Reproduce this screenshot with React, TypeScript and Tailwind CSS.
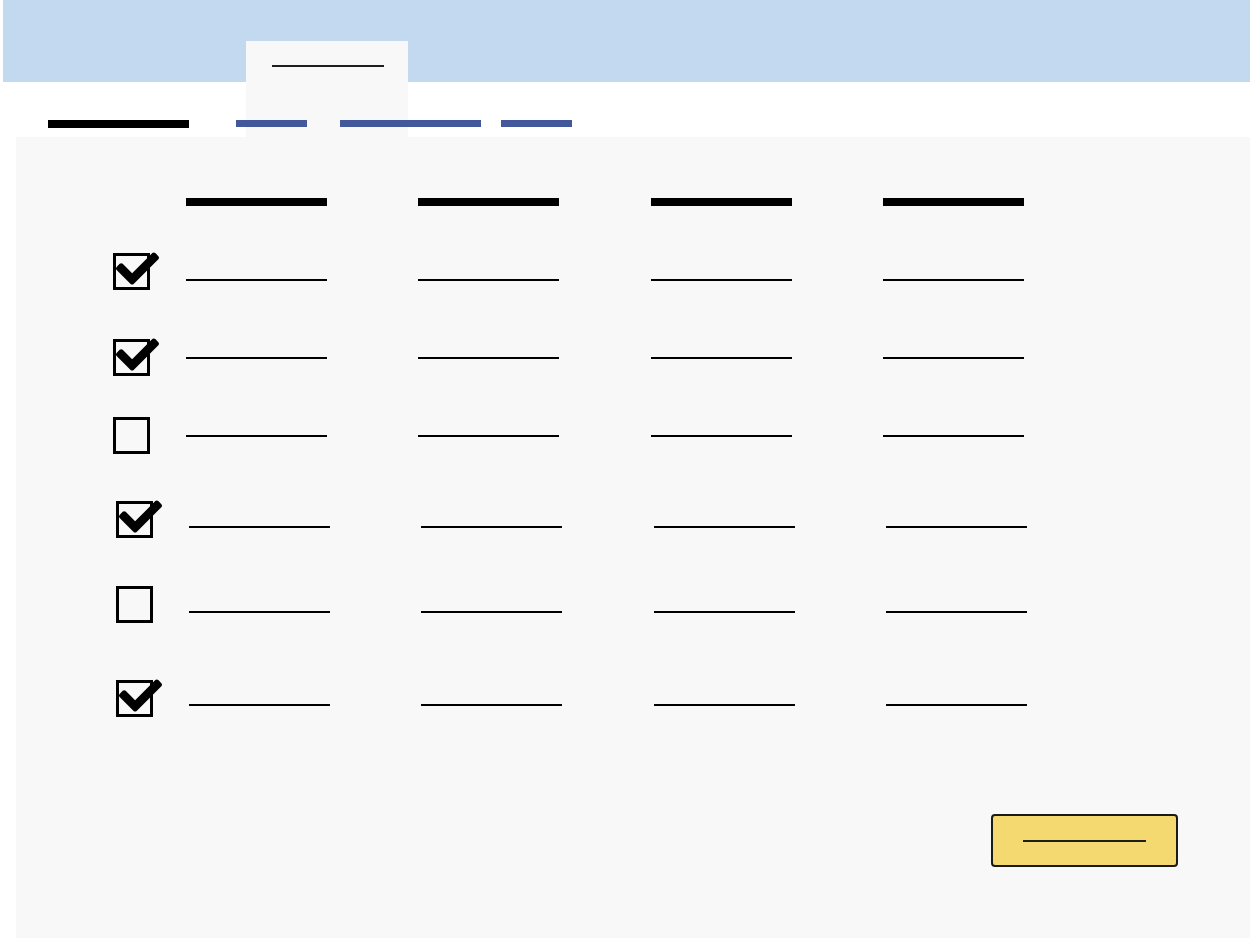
import React from "react";

const CHECK =
  "M173.898 439.404l-166.4-166.4c-9.997-9.997-9.997-26.206 0-36.204l36.203-36.204c9.997-9.998 26.207-9.998 36.204 0L192 312.69 432.095 72.596c9.997-9.997 26.207-9.997 36.204 0l36.203 36.204c9.997 9.997 9.997 26.206 0 36.204l-294.4 294.401c-9.998 9.997-26.207 9.997-36.204-.001z";

function Checkbox({ checked }: { checked: boolean }) {
  return (
    <div className="relative w-[37px] h-[37px] shrink-0 border-[3px] border-black bg-[#f8f8f8]">
      {checked && (
        <svg
          className="absolute left-[0px] top-[-9px] overflow-visible"
          width="43"
          height="43"
          viewBox="0 0 512 512"
        >
          <path d={CHECK} fill="#000" />
        </svg>
      )}
    </div>
  );
}

function Lines({ thick }: { thick?: boolean }) {
  const h = thick ? "h-[8px]" : "h-[2px]";
  return (
    <div className="flex">
      <div className={`w-[141px] ${h} bg-black`} />
      <div className={`w-[141px] ${h} bg-black ml-[91px]`} />
      <div className={`w-[141px] ${h} bg-black ml-[92px]`} />
      <div className={`w-[141px] ${h} bg-black ml-[91px]`} />
    </div>
  );
}

const rows = [
  { checked: true, wrap: "mt-[47px] ml-[97px]", line: "pt-[26px]" },
  { checked: true, wrap: "mt-[49px] ml-[97px]", line: "pt-[18px]" },
  { checked: false, wrap: "mt-[41px] ml-[97px]", line: "pt-[18px]" },
  { checked: true, wrap: "mt-[47px] ml-[100px]", line: "pt-[25px]" },
  { checked: false, wrap: "mt-[48px] ml-[100px]", line: "pt-[25px]" },
  { checked: true, wrap: "mt-[57px] ml-[100px]", line: "pt-[24px]" },
];

export default function App() {
  return (
    <div className="relative w-[1250px] h-[938px] bg-white overflow-hidden font-['Liberation_Sans',sans-serif]">
      {/* top bar */}
      <div className="ml-[3px] h-[82px] bg-[#c3d9f0]" />
      {/* active tab */}
      <div className="absolute left-[246px] top-[41px] w-[162px] h-[96px] bg-[#f8f8f8] pt-[24px] pl-[26px]">
        <div className="w-[112px] h-[2px] bg-[#1e1e1e]" />
      </div>
      {/* nav */}
      <div className="relative h-[55px] flex items-start pt-[38px]">
        <div className="ml-[48px] w-[141px] h-[8px] bg-black" />
        <div className="ml-[47px] w-[71px] h-[7px] bg-[#43589b]" />
        <div className="ml-[33px] w-[141px] h-[7px] bg-[#43589b]" />
        <div className="ml-[20px] w-[71px] h-[7px] bg-[#43589b]" />
      </div>
      {/* panel */}
      <div className="ml-[16px] h-[801px] bg-[#f8f8f8] pt-[61px] flex flex-col">
        <div className="ml-[170px]">
          <Lines thick />
        </div>
        {rows.map((r, i) => (
          <div key={i} className={`flex ${r.wrap}`}>
            <Checkbox checked={r.checked} />
            <div className={`ml-[36px] ${r.line}`}>
              <Lines />
            </div>
          </div>
        ))}
        <div className="mt-[97px] ml-[975px] w-[187px] h-[53px] bg-[#f3d96f] border-2 border-[#1a1a1a] rounded-[4px] flex items-center justify-center">
          <div className="w-[123px] h-[2px] bg-[#1e1e1e]" />
        </div>
      </div>
    </div>
  );
}
